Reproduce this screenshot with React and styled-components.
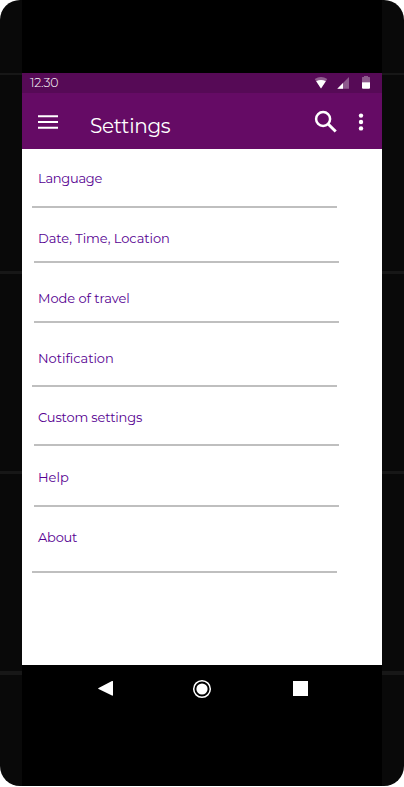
import React from "react";
import styled, { createGlobalStyle } from "styled-components";

const GlobalStyle = createGlobalStyle`
  * { box-sizing: border-box; }
  body { margin: 0; background: #fff; font-family: Montserrat, Inter, sans-serif; }
`;

const Device = styled.div`
  width: 404px;
  height: 786px;
  border-radius: 20px;
  overflow: hidden;
  display: grid;
  grid-template-columns: 22px 360px 22px;
  background: #090909;
`;

const Rail = styled.div`
  display: flex;
  flex-direction: column;
  padding-top: 73px;
`;

const Seam = styled.div`
  height: ${(p) => p.$size}px;
  margin-bottom: ${(p) => p.$gap}px;
  background: #171717;
`;

const Phone = styled.main`
  display: flex;
  flex-direction: column;
  padding-top: 73px;
  background: #000;
`;

const StatusBar = styled.div`
  height: 20px;
  display: flex;
  align-items: center;
  justify-content: space-between;
  padding: 0 8px;
  background: #560a56;
  color: #fff;
`;

const Clock = styled.span`
  font-size: 12.5px;
  font-weight: 300;
  line-height: 20px;
  letter-spacing: -0.25px;
`;

const StatusIcons = styled.svg`
  width: 60px;
  height: 20px;
  display: block;
`;

const Toolbar = styled.header`
  height: 56px;
  display: flex;
  align-items: flex-start;
  background: #650b65;
  color: #fff;
`;

const IconButton = styled.button`
  width: ${(p) => p.$width}px;
  height: 56px;
  padding: 0;
  border: 0;
  background: none;
  color: inherit;
`;

const Glyph = styled.svg`
  width: 100%;
  height: 100%;
  display: block;
`;

const Title = styled.h1`
  margin: 0;
  padding: 20px 0 0 16px;
  flex: 1;
  font-size: 20px;
  font-weight: 400;
  line-height: 26px;
  letter-spacing: -0.3px;
`;

const List = styled.ul`
  height: 516px;
  margin: 0;
  padding: 0;
  list-style: none;
  background: #fff;
`;

const Item = styled.li`
  width: 305px;
  height: ${(p) => p.$height}px;
  margin-left: ${(p) => p.$inset}px;
  padding: ${(p) => p.$top}px 0 0 ${(p) => 16 - p.$inset}px;
  border-bottom: 2px solid #bfbfbf;
`;

const Label = styled.span`
  display: block;
  font-size: 13px;
  line-height: 16px;
  letter-spacing: ${(p) => p.$spacing}px;
  color: #560091;
  white-space: nowrap;
`;

const NavBar = styled.nav`
  height: 48px;
  display: flex;
  justify-content: center;
`;

const NavButton = styled(IconButton)`
  width: 98px;
  height: 48px;
`;

const items = [
  { text: "Language", height: 59, inset: 10, top: 21, spacing: -0.27 },
  { text: "Date, Time, Location", height: 55, inset: 12, top: 22, spacing: -0.04 },
  { text: "Mode of travel", height: 60, inset: 12, top: 27, spacing: -0.04 },
  { text: "Notification", height: 64, inset: 10, top: 27, spacing: -0.03 },
  { text: "Custom settings", height: 59, inset: 12, top: 22, spacing: -0.16 },
  { text: "Help", height: 61, inset: 12, top: 23, spacing: 0 },
  { text: "About", height: 66, inset: 10, top: 22, spacing: -0.25 },
];

function SideRail() {
  return (
    <Rail>
      <Seam $size={2} $gap={196} />
      <Seam $size={3} $gap={197} />
      <Seam $size={3} $gap={197} />
      <Seam $size={4} $gap={0} />
    </Rail>
  );
}

export default function App() {
  return (
    <>
      <GlobalStyle />
      <Device>
        <SideRail />
        <Phone>
          <StatusBar>
            <Clock>12.30</Clock>
            <StatusIcons viewBox="0 0 60 20" fill="#fff">
              <path d="M0.7 6 Q7 2 13.3 6 L7 15.5Z" opacity=".35" />
              <path d="M2.2 8.2 Q7 6 11.8 8.2 L7 15.5Z" />
              <path d="M23.3 15.7 35 4V15.7Z" opacity=".33" />
              <path d="M23.3 15.7 29 10V15.7Z" />
              <path d="M48 9.3V4.6Q48 4 48.6 4H50V3H54V4H55.3Q56 4 56 4.6V9.3Z" opacity=".33" />
              <path d="M48 9.3H56V14.7Q56 15.7 55 15.7H49Q48 15.7 48 14.7Z" />
            </StatusIcons>
          </StatusBar>
          <Toolbar>
            <IconButton $width={52} aria-label="Menu">
              <Glyph viewBox="0 0 52 56">
                <path d="M16 23.2H36M16 29H36M16 34.7H36" stroke="#fff" strokeWidth="2.1" />
              </Glyph>
            </IconButton>
            <Title>Settings</Title>
            <IconButton $width={38} aria-label="Search">
              <Glyph viewBox="0 0 38 56" fill="none" stroke="#fff">
                <circle cx="17.1" cy="26" r="7" strokeWidth="2.5" />
                <path d="M22.1 31 29.7 38.5" strokeWidth="3" />
              </Glyph>
            </IconButton>
            <IconButton $width={38} aria-label="More options">
              <Glyph viewBox="0 0 38 56" fill="#fff">
                <circle cx="17" cy="22.6" r="2.2" />
                <circle cx="17" cy="29" r="2.2" />
                <circle cx="17" cy="35.4" r="2.2" />
              </Glyph>
            </IconButton>
          </Toolbar>
          <List>
            {items.map((it) => (
              <Item key={it.text} $height={it.height} $inset={it.inset} $top={it.top}>
                <Label $spacing={it.spacing}>{it.text}</Label>
              </Item>
            ))}
          </List>
          <NavBar>
            <NavButton aria-label="Back">
              <Glyph viewBox="0 0 98 48">
                <path d="M43.6 22.9 57 16.1Q58 15.6 58 16.6V30Q58 31 57 30.5L43.6 24.1Q42.5 23.5 43.6 22.9Z" fill="#fff" />
              </Glyph>
            </NavButton>
            <NavButton aria-label="Home">
              <Glyph viewBox="0 0 98 48">
                <circle cx="49" cy="24" r="8.3" fill="none" stroke="#fff" strokeWidth="1.5" />
                <circle cx="49" cy="24" r="5.6" fill="#fff" />
              </Glyph>
            </NavButton>
            <NavButton aria-label="Recent apps">
              <Glyph viewBox="0 0 98 48">
                <path d="M42 16H57V31H42Z" fill="#fff" />
              </Glyph>
            </NavButton>
          </NavBar>
        </Phone>
        <SideRail />
      </Device>
    </>
  );
}
